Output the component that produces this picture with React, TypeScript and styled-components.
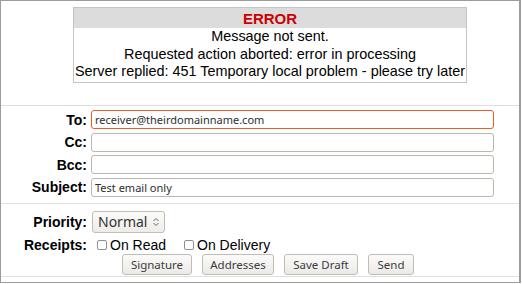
import styled, { createGlobalStyle } from "styled-components";

const GlobalStyle = createGlobalStyle`
  html, body {
    margin: 0;
    padding: 0;
    background: #ffffff;
  }
  body {
    font-family: "Liberation Sans", Arial, sans-serif;
    color: #000;
  }
`;

const uiFont = `"Noto Sans", "DejaVu Sans", sans-serif`;

const Frame = styled.div`
  box-sizing: border-box;
  width: 521px;
  height: 283px;
  border: 1px solid #9c9c9c;
  border-right-width: 2px;
  display: flex;
  flex-direction: column;
  overflow: hidden;
`;

const ErrorSection = styled.section`
  height: 105px;
  padding-top: 6px;
  box-sizing: border-box;
  border-bottom: 1px solid #dedede;
`;

const ErrorBox = styled.div`
  width: 392px;
  margin-left: 72px;
  border: 1px solid #c4c4c4;
  text-align: center;
  font-size: 14.4px;
  line-height: 17.5px;
`;

const ErrorTitle = styled.div`
  background: #dcdcdc;
  color: #cc0000;
  font-weight: bold;
  font-size: 15px;
  height: 20px;
  line-height: 21px;
`;

const ErrorLines = styled.div`
  padding: 0 0 1px;
`;

const Fields = styled.div`
  display: grid;
  grid-template-columns: 86px 403px;
  column-gap: 4px;
  row-gap: 3.5px;
  padding: 4px 0 6px;
  border-bottom: 1px solid #dedede;
`;

const Label = styled.label`
  font-weight: bold;
  font-size: 14px;
  text-align: right;
  align-self: center;
`;

const TextField = styled.input<{ $focused?: boolean }>`
  box-sizing: border-box;
  height: 19px;
  width: 100%;
  margin: 0;
  padding: 0 3px;
  border: 1px solid ${(p) => (p.$focused ? "#e3622c" : "#bdb6ae")};
  border-radius: 3px;
  background: #fff;
  font-family: ${uiFont};
  font-size: 11px;
  color: #2e2e2e;
  outline: none;
`;

const Options = styled.div`
  display: grid;
  grid-template-columns: 86px 1fr;
  column-gap: 5px;
  row-gap: 3px;
  padding-top: 7px;
  align-items: center;
`;

const SelectWrap = styled.div`
  position: relative;
  width: 73px;
  height: 22px;
`;

const Select = styled.select`
  appearance: none;
  box-sizing: border-box;
  width: 100%;
  height: 100%;
  margin: 0;
  padding: 0 0 0 5px;
  border: 1px solid #c2bcb4;
  border-radius: 3px;
  background: linear-gradient(#fbfbfa, #eeece9);
  font-family: ${uiFont};
  font-size: 14px;
  color: #333;
  opacity: 1;
`;

const Arrows = styled.svg`
  position: absolute;
  right: 6px;
  top: 6px;
  pointer-events: none;
`;

const Checks = styled.div`
  display: flex;
  align-items: center;
  font-size: 14px;
  padding-left: 5px;
  height: 18px;
`;

const Check = styled.label`
  display: flex;
  align-items: center;
  margin-right: 18px;
`;

const Box = styled.input`
  appearance: none;
  box-sizing: border-box;
  width: 10px;
  height: 10px;
  margin: 1px 3px 0 0;
  border: 1px solid #8f8f8f;
  border-radius: 2px;
  background: #fff;
`;

const Buttons = styled.div`
  display: flex;
  gap: 10px;
  padding: 0 0 0 121px;
  height: 23px;
  box-sizing: border-box;
  border-bottom: 1px solid #dedede;
`;

const Button = styled.button<{ $w: number }>`
  box-sizing: border-box;
  width: ${(p) => p.$w}px;
  height: 21px;
  margin: 0;
  padding: 0;
  border: 1px solid #c2bcb4;
  border-radius: 3px;
  background: linear-gradient(#fbfbfa, #eceae7);
  font-family: ${uiFont};
  font-size: 11.5px;
  color: #3c3c3c;
`;

export default function App() {
  return (
    <>
      <GlobalStyle />
      <Frame>
        <ErrorSection>
          <ErrorBox>
            <ErrorTitle>ERROR</ErrorTitle>
            <ErrorLines>
              <div>Message not sent.</div>
              <div>Requested action aborted: error in processing</div>
              <div>Server replied: 451 Temporary local problem - please try later</div>
            </ErrorLines>
          </ErrorBox>
        </ErrorSection>

        <Fields>
          <Label>To:</Label>
          <TextField $focused defaultValue="receiver@theirdomainname.com" />
          <Label>Cc:</Label>
          <TextField />
          <Label>Bcc:</Label>
          <TextField />
          <Label>Subject:</Label>
          <TextField defaultValue="Test email only" />
        </Fields>

        <Options>
          <Label>Priority:</Label>
          <SelectWrap>
            <Select defaultValue="normal">
              <option value="high">High</option>
              <option value="normal">Normal</option>
              <option value="low">Low</option>
            </Select>
            <Arrows width="6" height="10" viewBox="0 0 6 10">
              <path d="M0.5 4 L3 1.5 L5.5 4" fill="none" stroke="#666" strokeWidth="1" />
              <path d="M0.5 6 L3 8.5 L5.5 6" fill="none" stroke="#666" strokeWidth="1" />
            </Arrows>
          </SelectWrap>
          <Label>Receipts:</Label>
          <Checks>
            <Check>
              <Box type="checkbox" />
              On Read
            </Check>
            <Check>
              <Box type="checkbox" />
              On Delivery
            </Check>
          </Checks>
        </Options>

        <Buttons>
          <Button $w={70}>Signature</Button>
          <Button $w={72}>Addresses</Button>
          <Button $w={74}>Save Draft</Button>
          <Button $w={46}>Send</Button>
        </Buttons>
      </Frame>
    </>
  );
}
